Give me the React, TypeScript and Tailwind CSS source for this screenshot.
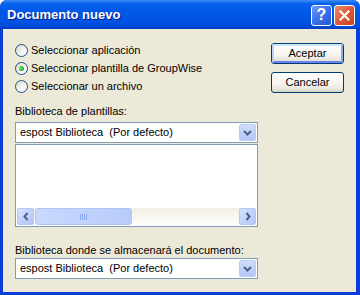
import React from 'react';

const font = "font-['Liberation_Sans',Arial,sans-serif]";

function Radio({ label, checked }: { label: string; checked?: boolean }) {
  return (
    <div className="flex h-[13px] items-center gap-[3px]">
      <span className="flex h-[13px] w-[13px] items-center justify-center rounded-full border border-[#1C5180] bg-[linear-gradient(135deg,#DCD9CF_0%,#F4F3EE_55%,#FFFFFF_100%)]">
        {checked && (
          <span className="h-[5px] w-[5px] rounded-full bg-[radial-gradient(circle_at_40%_40%,#7BE37A_0%,#2DB02B_55%,#1A8F1A_100%)]" />
        )}
      </span>
      <span className="text-[11px] leading-[13px] text-black">{label}</span>
    </div>
  );
}

function DownChevron() {
  return (
    <svg width="9" height="6" viewBox="0 0 9 6">
      <path d="M1 1 L4.5 4.5 L8 1" fill="none" stroke="#4D6185" strokeWidth="2" />
    </svg>
  );
}

function Combo() {
  return (
    <div className="flex h-[21px] items-stretch border border-[#7F9DB9] bg-white p-[1px]">
      <span className="flex flex-1 items-center whitespace-pre pl-[3px] text-[11px] text-black">
        espost Biblioteca  (Por defecto)
      </span>
      <span className="flex w-[17px] items-center justify-center rounded-[2px] border border-[#BACCF5] bg-[linear-gradient(180deg,#D2DEFB_0%,#C1D2FA_50%,#B5C8F6_100%)]">
        <DownChevron />
      </span>
    </div>
  );
}

function ScrollButton({ dir }: { dir: 'left' | 'right' }) {
  return (
    <span className="flex h-[17px] w-[17px] items-center justify-center rounded-[2px] border border-[#B4C8F6] bg-[linear-gradient(135deg,#D6E1FC_0%,#C2D3FB_50%,#B3C7F6_100%)]">
      <svg width="6" height="9" viewBox="0 0 6 9">
        <path
          d={dir === 'left' ? 'M4.5 1 L1.5 4.5 L4.5 8' : 'M1.5 1 L4.5 4.5 L1.5 8'}
          fill="none"
          stroke="#4D6185"
          strokeWidth="2"
        />
      </svg>
    </span>
  );
}

function XpButton({ label, isDefault }: { label: string; isDefault?: boolean }) {
  return (
    <div className="h-[21px] w-[73px] rounded-[3px] border border-[#003C74] bg-[linear-gradient(180deg,#FFFFFF_0%,#F4F3EE_60%,#E3E0D6_90%,#D6D0C5_100%)]">
      <div
        className={
          isDefault
            ? 'flex h-full w-full items-center justify-center rounded-[2px] border-2 border-t-[#CEE7FF] border-l-[#BCD4F6] border-r-[#89ADE4] border-b-[#6982EE] text-[11px] text-black'
            : 'flex h-full w-full items-center justify-center text-[11px] text-black'
        }
      >
        {label}
      </div>
    </div>
  );
}

export default function App() {
  return (
    <div className={`${font} flex h-[295px] w-[360px] flex-col overflow-hidden rounded-t-[7px] bg-[#0A3ED6]`}>
      <div className="flex h-[29px] items-center justify-between bg-[linear-gradient(180deg,#3D8DF7_0%,#0A62EE_12%,#0058E8_35%,#0054E3_70%,#004AD8_92%,#003BBE_100%)] pl-[7px] pr-[5px]">
        <span className="pt-[1px] text-[13px] font-bold text-white [text-shadow:1px_1px_0_#0A1C8C]">
          Documento nuevo
        </span>
        <div className="mt-[1px] flex gap-[2px]">
          <span className="flex h-[21px] w-[21px] items-center justify-center rounded-[3px] border border-white bg-[linear-gradient(135deg,#6C9CF7_0%,#3A6EEA_50%,#2258DA_100%)] text-[16px] font-bold leading-none text-white">
            ?
          </span>
          <span className="flex h-[21px] w-[21px] items-center justify-center rounded-[3px] border border-white bg-[linear-gradient(135deg,#F08A6C_0%,#E1583A_50%,#C8401F_100%)]">
            <svg width="11" height="11" viewBox="0 0 11 11">
              <path d="M1.5 1.5 L9.5 9.5 M9.5 1.5 L1.5 9.5" stroke="white" strokeWidth="2.2" strokeLinecap="square" />
            </svg>
          </span>
        </div>
      </div>

      <div className="flex flex-1 pb-[3px] pl-[3px] pr-[4px]">
        <div className="flex flex-1 bg-[#ECE9D8] px-[12px] pt-[14px]">
          <div className="flex w-[243px] flex-col">
            <div className="mt-[1px] flex flex-col gap-[5px]">
              <Radio label="Seleccionar aplicación" />
              <Radio label="Seleccionar plantilla de GroupWise" checked />
              <Radio label="Seleccionar un archivo" />
            </div>

            <p className="mt-[12px] text-[11px] leading-[13px] text-black">Biblioteca de plantillas:</p>
            <div className="mt-[4px]">
              <Combo />
            </div>

            <div className="mt-[1px] flex h-[83px] flex-col border border-[#7F9DB9] bg-white p-[1px]">
              <div className="flex-1" />
              <div className="flex h-[17px] bg-[linear-gradient(180deg,#F1EFE6_0%,#F7F6F1_50%,#FEFEFB_100%)]">
                <ScrollButton dir="left" />
                <span className="ml-[1px] flex h-[17px] w-[97px] items-center justify-center gap-[1px] rounded-[3px] border border-[#B1C5F4] bg-[linear-gradient(90deg,#C9D8FC_0%,#C0D1FB_50%,#B8CBF8_100%)]">
                  <span className="h-[6px] w-[1px] bg-[#8CAAF0]" />
                  <span className="h-[6px] w-[1px] bg-[#8CAAF0]" />
                  <span className="h-[6px] w-[1px] bg-[#8CAAF0]" />
                  <span className="h-[6px] w-[1px] bg-[#8CAAF0]" />
                </span>
                <div className="flex-1" />
                <ScrollButton dir="right" />
              </div>
            </div>

            <p className="mt-[17px] text-[11px] leading-[13px] text-black">
              Biblioteca donde se almacenará el documento:
            </p>
            <div className="mt-[1px]">
              <Combo />
            </div>
          </div>

          <div className="ml-auto flex flex-col gap-[8px]">
            <XpButton label="Aceptar" isDefault />
            <XpButton label="Cancelar" />
          </div>
        </div>
      </div>
    </div>
  );
}
